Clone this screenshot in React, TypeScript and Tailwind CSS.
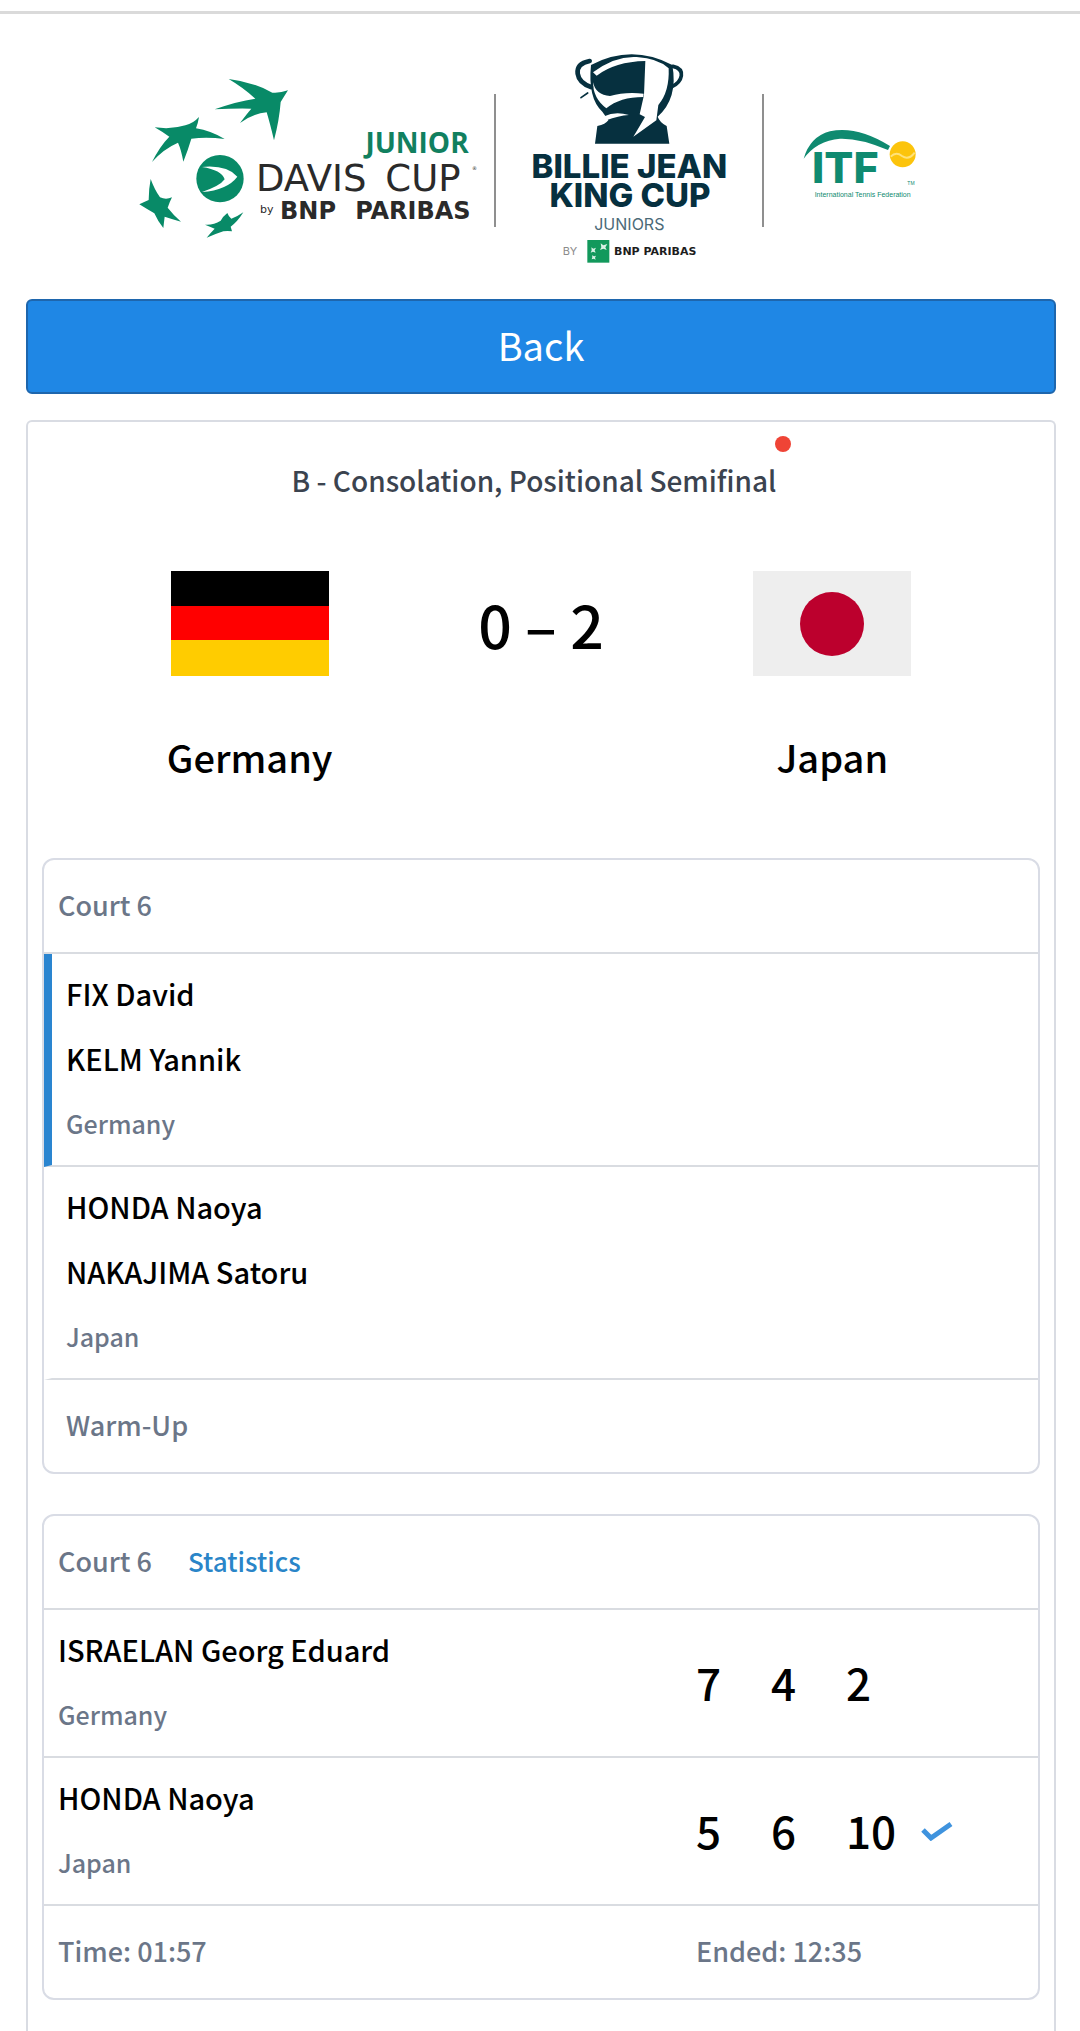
interface Team {
  id: string;
  players: string[];
  country: string;
  sets: string[];
  isWinner?: boolean;
  isServing?: boolean;
}

interface Match {
  court: string;
  teams: Team[];
  status?: string;
  time?: string;
  ended?: string;
  isDoubles?: boolean;
}

const matches: Match[] = [
  {
    court: 'Court 6',
    isDoubles: true,
    status: 'Warm-Up',
    teams: [
      { id: 'ger', players: ['FIX David', 'KELM Yannik'], country: 'Germany', sets: [], isServing: true },
      { id: 'jpn', players: ['HONDA Naoya', 'NAKAJIMA Satoru'], country: 'Japan', sets: [] },
    ],
  },
  {
    court: 'Court 6',
    time: '01:57',
    ended: '12:35',
    teams: [
      { id: 'ger', players: ['ISRAELAN Georg Eduard'], country: 'Germany', sets: ['7', '4', '2'] },
      { id: 'jpn', players: ['HONDA Naoya'], country: 'Japan', sets: ['5', '6', '10'], isWinner: true },
    ],
  },
];

function DavisCupLogo() {
  return (
    <svg viewBox="0 0 1122 720" className="w-[374px] h-[240px]" role="img" aria-label="Junior Davis Cup">
      <g fill="#088a67">
        {/* swallows */}
        <path d="M326 117 Q400 126 457 158 Q480 160 504 151 Q492 170 482 186 Q478 240 462 301 Q450 250 440 217 Q400 220 360 249 Q380 222 394 206 Q340 205 284 208 Q350 184 406 176 Q370 143 326 117Z" />
        <path d="M104 262 Q155 269 196 256 Q220 250 237 231 Q234 250 228 265 Q272 272 314 297 Q260 290 214 296 Q204 330 190 365 Q184 330 174 308 Q130 327 96 366 Q120 318 148 290 Q128 276 104 262Z" />
        <path d="M92 417 Q104 450 120 472 Q138 480 156 472 Q148 488 143 503 Q160 525 183 545 Q155 537 134 530 Q132 546 130 564 Q114 545 103 520 Q82 508 58 493 Q72 486 86 480 Q86 448 92 417Z" />
        <path d="M255 554 Q280 556 302 542 Q308 530 322 519 Q326 530 334 536 Q352 530 370 517 Q352 546 332 560 L336 574 Q322 572 310 574 Q286 582 260 593 Q272 578 284 566 Q270 560 255 554Z" />
        <circle cx="300" cy="416" r="71" />
      </g>
      <path d="M246 381 Q320 374 352 410 Q322 450 246 456 Q300 438 314 418 Q305 390 246 381Z" fill="#fff" />
      <text x="1046" y="340" textAnchor="end" fill="#11805f" className="font-['Open_Sans',sans-serif] font-bold text-[84px]">JUNIOR</text>
      <g fill="#2a2a2a" className="font-['DejaVu_Sans',sans-serif]">
        <text x="408" y="452" className="text-[111px]">DAVIS</text>
        <text x="796" y="452" className="text-[111px]">CUP</text>
        <text x="1056" y="390" className="text-[15px]">®</text>
        <text x="420" y="520" className="text-[33px]">by</text>
        <text x="480" y="538" className="font-bold text-[72px]">BNP</text>
        <text x="1052" y="538" textAnchor="end" className="font-bold text-[72px]">PARIBAS</text>
      </g>
    </svg>
  );
}

function BillieJeanKingCupLogo() {
  return (
    <svg viewBox="0 0 798 720" className="w-[266px] h-[240px]" role="img" aria-label="Billie Jean King Cup Juniors">
      {/* trophy */}
      <g transform="translate(207 15)">
        <path d="M78 60 Q200 -4 322 60 Q340 160 278 215 Q284 232 305 243 L313 296 H90 L97 243 Q122 238 130 226 L112 200 Q68 160 78 60Z" fill="#06303f" />
        <path d="M84 82 Q150 32 215 36 Q280 40 311 70 Q314 140 280 180 L274 226 L205 275 L226 240 L240 216 L224 208 L237 150 L241 48 Q150 50 95 92Z" fill="#fff" />
        <path d="M84 112 Q92 150 135 153 Q180 140 236 146 L235 156 Q165 156 124 190 Q84 160 84 112Z" fill="#fff" />
        <path d="M118 214 Q150 198 192 210 Q160 212 124 226Z" fill="#fff" />
        <g fill="none" stroke="#06303f" strokeLinecap="round">
          <path d="M74 48 Q34 56 38 86 Q42 114 78 126" strokeWidth="14" />
          <path d="M324 64 Q352 70 349 92 Q346 112 322 124" strokeWidth="11" />
          <path d="M48 158 L68 144" strokeWidth="5" />
        </g>
      </g>
      <g transform="translate(12 0)">
        <g fill="#06303f" textAnchor="middle" className="font-[Inter,sans-serif] font-extrabold text-[99px]">
          <text x="388" y="415">BILLIE JEAN</text>
          <text x="390" y="501">KING CUP</text>
        </g>
        <text x="388" y="569" textAnchor="middle" fill="#4b6a78" className="font-[Inter,sans-serif] text-[48px]">JUNIORS</text>
        <text x="188" y="646" fill="#8b8b8b" className="font-[Inter,sans-serif] text-[33px]">BY</text>
        <rect x="262" y="600" width="66" height="68" fill="#12995c" />
        <path d="M302 610 l8 6 12-4 -6 10 4 8 -10-4 -10 4 4-8zM274 622 l6 4 8-3 -4 8 3 7 -8-3 -7 3 3-7zM276 646 l6 3 6-2 -3 6 2 6 -6-3 -6 2 2-6z" fill="#d9f2e6" />
        <text x="342" y="646" fill="#1d1d1d" className="font-['DejaVu_Sans',sans-serif] font-bold text-[33px]">BNP PARIBAS</text>
      </g>
    </svg>
  );
}

function ItfLogo() {
  return (
    <svg viewBox="0 0 588 720" className="w-[196px] h-[240px]" role="img" aria-label="International Tennis Federation">
      <g transform="translate(-792 0)">
        <path d="M911 356 Q930 290 990 274 Q1070 256 1170 318 L1164 330 Q1080 294 1020 296 Q950 302 911 356Z" fill="#0f8a70" />
        <circle cx="1208" cy="343" r="39" fill="#fcc40c" />
        <path d="M1172 350 Q1188 334 1206 348 Q1226 362 1244 338" fill="none" stroke="#ffe27a" strokeWidth="6" />
        <text x="936" y="430" fill="#0f8a70" className="font-[Inter,sans-serif] font-extrabold text-[129px]">ITF</text>
        <text x="1222" y="436" fill="#0f8a70" className="font-['Liberation_Sans',sans-serif] text-[15px]">TM</text>
        <text x="944" y="472" fill="#0f8a70" className="font-['Liberation_Sans',sans-serif] text-[21px]">International Tennis Federation</text>
      </g>
    </svg>
  );
}

function GermanyFlag() {
  return (
    <svg viewBox="0 0 158 105" className="w-[158px] h-[105px]" role="img" aria-label="Flag of Germany">
      <rect width="158" height="35" fill="#000" />
      <rect y="35" width="158" height="35" fill="#f00" />
      <rect y="69" width="158" height="36" fill="#fc0" />
    </svg>
  );
}

function JapanFlag() {
  return (
    <svg viewBox="0 0 158 105" className="w-[158px] h-[105px]" role="img" aria-label="Flag of Japan">
      <rect width="158" height="105" fill="#eee" />
      <circle cx="79" cy="53" r="32" fill="#bc002d" />
    </svg>
  );
}

function CheckMark() {
  return (
    <svg viewBox="0 0 32 22" className="w-8 h-[22px]" role="img" aria-label="Winner">
      <path d="M2 11 L10 19 L30 5" fill="none" stroke="#3f93de" strokeWidth="5" />
    </svg>
  );
}

function TeamRow({ team, isDoubles }: { team: Team; isDoubles?: boolean }) {
  // doubles rows keep room on the left for the serving marker
  const marker = team.isServing ? 'border-l-[#2a85d0]' : 'border-l-transparent';

  return (
    <div
      className={`flex items-center border-b-2 border-b-[#d9dce1] pt-[7px] pb-[9px] pl-[14px] ${isDoubles ? `border-l-8 ${marker}` : ''}`}
    >
      <div className="flex-1 font-medium leading-[65px]">
        {team.players.map((name) => (
          <p key={name} className="text-[29px] text-black">{name}</p>
        ))}
        <p className="text-[25px] text-[#6b7688]">{team.country}</p>
      </div>
      {team.sets.length > 0 && (
        <div className="flex items-center w-[342px] text-[44px] font-medium text-black">
          {team.sets.map((games, i) => (
            <span key={i} className="min-w-[75px]">{games}</span>
          ))}
          {team.isWinner && <CheckMark />}
        </div>
      )}
    </div>
  );
}

function MatchCard({ match }: { match: Match }) {
  return (
    <section className="border-2 border-[#d9dce5] rounded-xl text-[27px] font-medium leading-[90px] text-[#6b7688]">
      <div className="flex gap-9 border-b-2 border-[#d9dce1] px-[14px] pb-[2px]">
        <span>{match.court}</span>
        {match.ended && <a href="#statistics" className="text-[26px] text-[#2a85c8]">Statistics</a>}
      </div>
      {match.teams.map((team) => (
        <TeamRow key={team.id} team={team} isDoubles={match.isDoubles} />
      ))}
      {match.status && <p className="pl-[22px] pb-[2px]">{match.status}</p>}
      {match.time && (
        <div className="flex pl-[14px] pb-[2px]">
          <span className="flex-1">Time: {match.time}</span>
          <span className="w-[342px]">Ended: {match.ended}</span>
        </div>
      )}
    </section>
  );
}

export default function App() {
  return (
    <div className="flex min-h-screen flex-col bg-white pt-[11px] font-['Noto_Sans_CJK_SC',sans-serif]">
      <div className="h-[3px] bg-[#dadada]" />

      {/* Logos */}
      <header className="flex items-center justify-center mt-[26px] mb-[19px]">
        <DavisCupLogo />
        <div className="w-[2px] h-[133px] bg-[#8f8f8f]" />
        <BillieJeanKingCupLogo />
        <div className="w-[2px] h-[133px] bg-[#8f8f8f]" />
        <ItfLogo />
      </header>

      <main className="flex flex-1 flex-col pl-[26px] pr-6">
        <button
          type="button"
          className="w-full h-[95px] pb-1 rounded-md border-2 border-[#1e66ad] bg-[#1f87e5] text-[38px] text-white"
        >
          Back
        </button>

        <div className="mt-[26px] flex-1 border-2 border-b-0 border-[#d9dce3] rounded-t-md px-[14px] pb-7">
          {/* Tie header */}
          <div className="flex justify-center pt-9 pr-[14px]">
            <h1 className="relative text-[28px] leading-[44px] font-medium text-[#3b434f]">
              B - Consolation, Positional Semifinal
              <span className="absolute -top-[22px] -right-[15px] size-4 rounded-full bg-[#ef4436]" />
            </h1>
          </div>

          <div className="grid grid-cols-3 justify-items-center items-center mt-[69px] px-[62px] font-medium text-black">
            <GermanyFlag />
            <p className="text-[59px] leading-[105px]">0 – 2</p>
            <JapanFlag />
          </div>
          <div className="grid grid-cols-3 justify-items-center mt-[57px] px-[62px] text-[38px] leading-[48px] font-medium text-black">
            <p>Germany</p>
            <p className="col-start-3">Japan</p>
          </div>

          <div className="flex flex-col gap-10 mt-[77px]">
            {matches.map((match, i) => (
              <MatchCard key={i} match={match} />
            ))}
          </div>
        </div>
      </main>
    </div>
  );
}
